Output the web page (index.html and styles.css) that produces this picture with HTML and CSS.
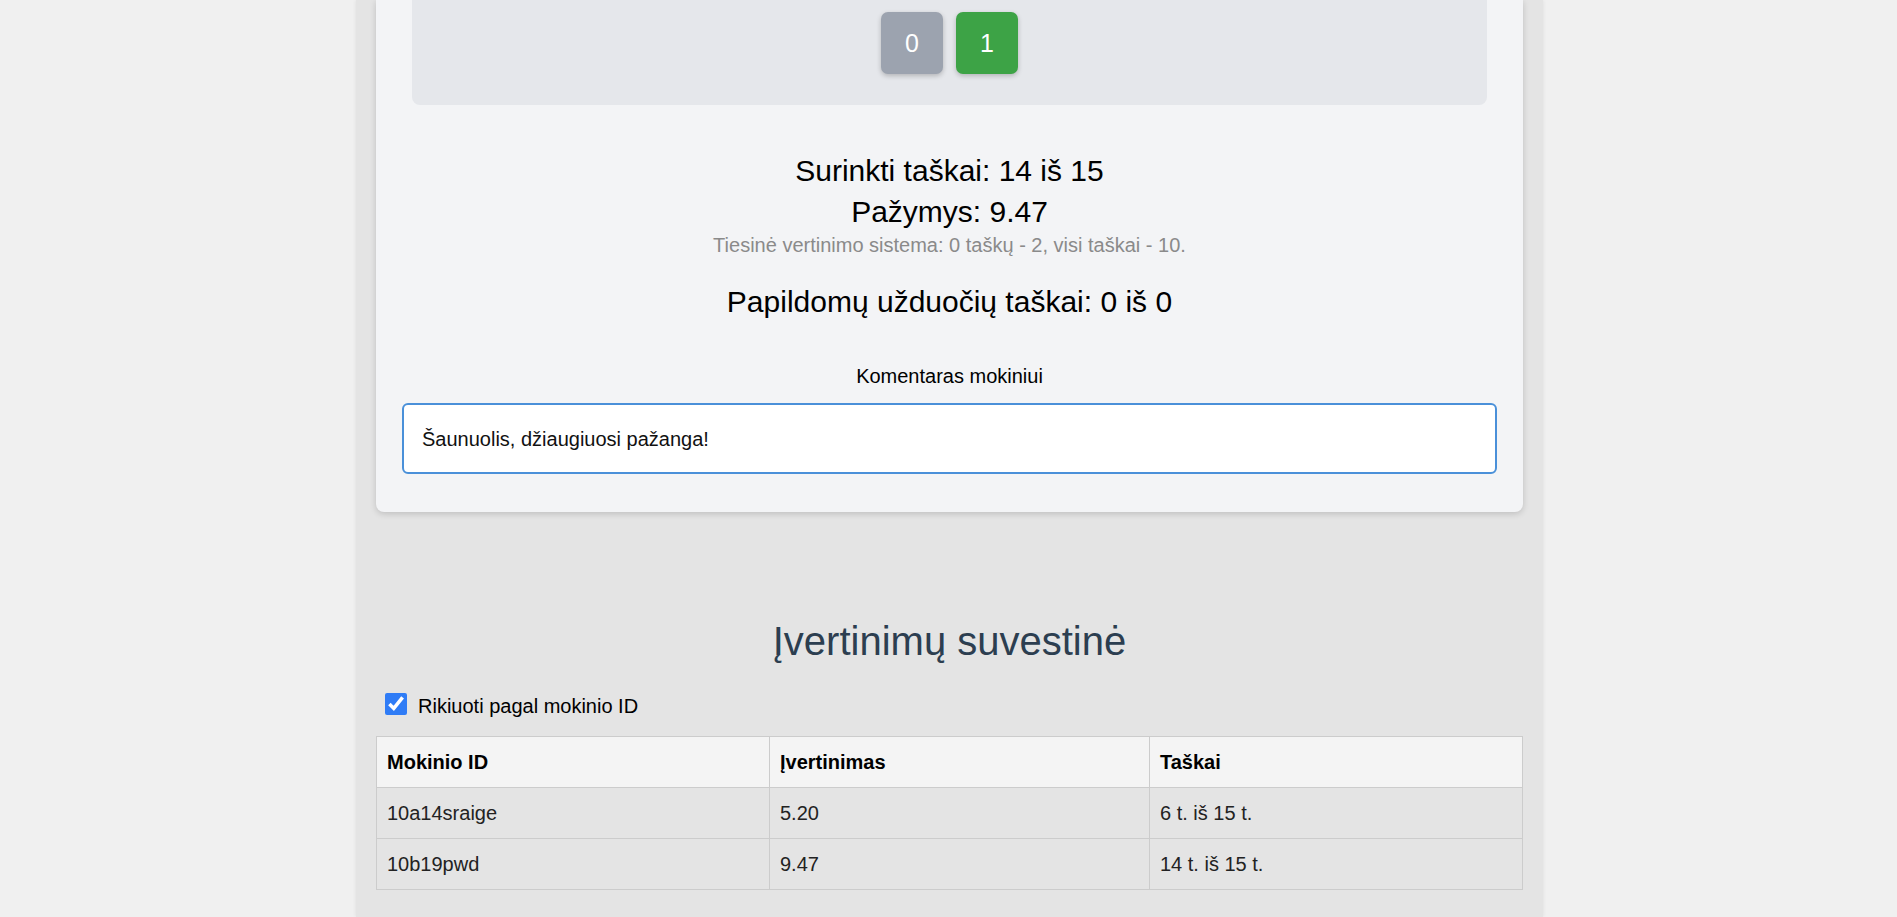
FILE: index.html
```html
<!DOCTYPE html>
<html lang="lt">
<head>
<meta charset="utf-8">
<title>Vertinimas</title>
<link rel="stylesheet" href="styles.css">
</head>
<body>
<div class="page">
  <div class="card">
    <div class="answer-panel">
      <button class="choice choice-off" type="button">0</button>
      <button class="choice choice-on" type="button">1</button>
    </div>
    <div class="stats">
      <div class="stat-big">Surinkti taškai: 14 iš 15</div>
      <div class="stat-big">Pažymys: 9.47</div>
      <div class="stat-note">Tiesinė vertinimo sistema: 0 taškų - 2, visi taškai - 10.</div>
      <div class="stat-big stat-extra">Papildomų užduočių taškai: 0 iš 0</div>
    </div>
    <label class="comment-label" for="comment">Komentaras mokiniui</label>
    <textarea id="comment" class="comment-box">Šaunuolis, džiaugiuosi pažanga!</textarea>
  </div>

  <section class="summary">
    <h2 class="summary-title">Įvertinimų suvestinė</h2>
    <div class="sort-row">
      <input type="checkbox" id="sort" class="sort-check" checked>
      <label for="sort" class="sort-label">Rikiuoti pagal mokinio ID</label>
    </div>
    <table class="grades">
      <colgroup>
        <col class="col-id">
        <col class="col-grade">
        <col class="col-points">
      </colgroup>
      <thead>
        <tr><th>Mokinio ID</th><th>Įvertinimas</th><th>Taškai</th></tr>
      </thead>
      <tbody>
        <tr><td>10a14sraige</td><td>5.20</td><td>6 t. iš 15 t.</td></tr>
        <tr><td>10b19pwd</td><td>9.47</td><td>14 t. iš 15 t.</td></tr>
      </tbody>
    </table>
  </section>
</div>
</body>
</html>
```

FILE: styles.css
```css
* { box-sizing: border-box; }

html, body {
  margin: 0;
  padding: 0;
  background: #f0f0f0;
  font-family: "Liberation Sans", Arial, sans-serif;
  color: #000;
}

.page {
  width: 1187px;
  margin: 0 0 0 356px;
  min-height: 917px;
  background: #e4e4e4;
  box-shadow: 0 0 4px rgba(0, 0, 0, 0.08);
  padding-bottom: 20px;
}

.card {
  margin: 0 20px;
  padding: 0 26px 38px;
  background: #f3f4f6;
  border-radius: 0 0 8px 8px;
  box-shadow: 0 2px 6px rgba(0, 0, 0, 0.16);
  display: flex;
  flex-direction: column;
}

.answer-panel {
  margin: 0 10px;
  padding: 12px 0 31px;
  background: #e5e7eb;
  border-radius: 0 0 8px 8px;
  display: flex;
  justify-content: center;
  gap: 13px;
}

.choice {
  width: 62px;
  height: 62px;
  border: none;
  border-radius: 7px;
  color: #fff;
  font-family: "Liberation Sans", Arial, sans-serif;
  font-size: 25px;
  padding: 0;
  box-shadow: 0 2px 5px rgba(0, 0, 0, 0.22);
}

.choice-off { background: #9ca3af; }
.choice-on { background: #3da346; }

.stats {
  margin-top: 45px;
  text-align: center;
}

.stat-big {
  font-size: 30px;
  line-height: 41px;
}

.stat-note {
  font-size: 20px;
  line-height: 26px;
  color: #8a8a8a;
}

.stat-extra {
  margin-top: 23px;
}

.comment-label {
  margin-top: 43px;
  text-align: center;
  font-size: 20px;
  line-height: 22px;
}

.comment-box {
  margin-top: 16px;
  width: 100%;
  height: 71px;
  padding: 23px 18px 0;
  border: 2px solid #4a90d9;
  border-radius: 6px;
  background: #fff;
  font-family: "Liberation Sans", Arial, sans-serif;
  font-size: 20px;
  color: #111;
  resize: none;
  outline: none;
  overflow: hidden;
}

.summary {
  padding: 0 20px;
}

.summary-title {
  margin: 107px 0 0;
  text-align: center;
  font-size: 40px;
  line-height: 45px;
  font-weight: normal;
  color: #2c3e50;
}

.sort-row {
  margin-top: 29px;
  padding-left: 9px;
  display: flex;
  align-items: center;
  gap: 11px;
  height: 22px;
}

.sort-check {
  width: 22px;
  height: 22px;
  margin: 0;
  accent-color: #2f7cf6;
}

.sort-label {
  font-size: 20px;
  line-height: 22px;
  margin-top: 4px;
}

.grades {
  margin-top: 21px;
  width: 100%;
  border-collapse: collapse;
  table-layout: fixed;
  font-size: 20px;
  line-height: 22px;
}

.col-id { width: 393px; }
.col-grade { width: 380px; }
.col-points { width: auto; }

.grades th,
.grades td {
  border: 1px solid #cccccc;
  padding: 14px 10px;
  text-align: left;
}

.grades th {
  background: #f4f4f4;
  font-weight: bold;
  color: #000;
}

.grades td {
  color: #222;
}
```
